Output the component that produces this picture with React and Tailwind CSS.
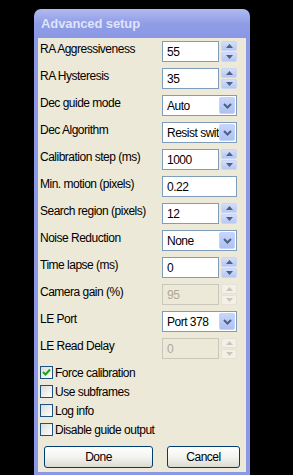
const rows = [
  { label: 'RA Aggressiveness', kind: 'spin', value: '55' },
  { label: 'RA Hysteresis', kind: 'spin', value: '35' },
  { label: 'Dec guide mode', kind: 'select', value: 'Auto' },
  { label: 'Dec Algorithm', kind: 'select', value: 'Resist swit' },
  { label: 'Calibration step (ms)', kind: 'spin', value: '1000' },
  { label: 'Min. motion (pixels)', kind: 'text', value: '0.22' },
  { label: 'Search region (pixels)', kind: 'spin', value: '12' },
  { label: 'Noise Reduction', kind: 'select', value: 'None' },
  { label: 'Time lapse (ms)', kind: 'spin', value: '0' },
  { label: 'Camera gain (%)', kind: 'spin', value: '95', disabled: true },
  { label: 'LE Port', kind: 'select', value: 'Port 378' },
  { label: 'LE Read Delay', kind: 'spin', value: '0', disabled: true },
]

const checks = [
  { label: 'Force calibration', checked: true },
  { label: 'Use subframes' },
  { label: 'Log info' },
  { label: 'Disable guide output' },
]

function Arrow({ up, disabled }) {
  return (
    <svg width="7" height="4" viewBox="0 0 7 4">
      <path
        d={up ? 'M0 4 L3.5 0 L7 4 Z' : 'M0 0 L3.5 4 L7 0 Z'}
        fill={disabled ? '#c9c7ba' : '#4d6185'}
      />
    </svg>
  )
}

function SpinButtons({ disabled }) {
  const cls = disabled
    ? 'bg-[#f3f1e7] border-[#e4e2d6]'
    : 'bg-gradient-to-b from-[#d4def9] to-[#b6c7f1] border-[#c9d6f8]'
  return (
    <div className="ml-[2px] flex w-[16px] flex-col gap-[1px]">
      <div className={`flex h-[10px] items-center justify-center rounded-[2px] border ${cls}`}>
        <Arrow up disabled={disabled} />
      </div>
      <div className={`flex h-[10px] items-center justify-center rounded-[2px] border ${cls}`}>
        <Arrow disabled={disabled} />
      </div>
    </div>
  )
}

function Control({ row }) {
  if (row.kind === 'select') {
    return (
      <div className="flex h-[21px] w-[75px] items-center border border-[#7f9db9] bg-white pl-[4px] pr-[1px]">
        <span className="flex-1 overflow-hidden whitespace-nowrap text-[12px] leading-none text-black">{row.value}</span>
        <div className="flex h-[17px] w-[16px] items-center justify-center rounded-[2px] border border-[#c3d3fd] bg-gradient-to-b from-[#c6d5fb] to-[#aec1f0]">
          <svg width="9" height="6" viewBox="0 0 9 6">
            <path d="M1 1 L4.5 4.5 L8 1" fill="none" stroke="#4d6185" strokeWidth="2" />
          </svg>
        </div>
      </div>
    )
  }
  if (row.kind === 'text') {
    return (
      <div className="flex h-[21px] w-[75px] items-center border border-[#7f9db9] bg-white px-[4px] text-[12px] leading-none text-black">
        {row.value}
      </div>
    )
  }
  return (
    <div className="flex h-[21px] w-[75px]">
      <div
        className={`flex h-[21px] w-[57px] items-center border px-[4px] text-[12px] leading-none ${
          row.disabled ? 'border-[#c9c7ba] bg-[#ece9d8] text-[#aca899]' : 'border-[#7f9db9] bg-white text-black'
        }`}
      >
        {row.value}
      </div>
      <SpinButtons disabled={row.disabled} />
    </div>
  )
}

function Checkbox({ checked }) {
  return (
    <div className="flex h-[13px] w-[13px] items-center justify-center border border-[#1c5180] bg-gradient-to-br from-[#dcdcd7] to-white">
      {checked && (
        <svg width="9" height="9" viewBox="0 0 9 9">
          <path d="M1 4 L3.5 6.5 L8 1.5" fill="none" stroke="#21a121" strokeWidth="2" />
        </svg>
      )}
    </div>
  )
}

function XpButton({ children, className }) {
  return (
    <div
      className={`flex h-[22px] items-center justify-center rounded-[3px] border border-[#003c74] bg-gradient-to-b from-white via-[#f3f3ef] to-[#dcdbd2] text-[12px] text-black ${className}`}
    >
      {children}
    </div>
  )
}

export default function App() {
  return (
    <div className="h-[475px] w-[293px] overflow-hidden bg-black pt-[9px] font-['Liberation_Sans',sans-serif] tracking-[-0.5px]">
      <div className="ml-[34px] flex h-[466px] w-[216px] flex-col">
        {/* Title bar */}
        <div className="flex h-[29px] items-center rounded-t-[7px] bg-gradient-to-b from-[#b0b9f2] via-[#909de6] to-[#8a97e4] pl-[7px]">
          <span className="text-[13px] font-bold tracking-[-0.1px] text-[#dfe4fa]">Advanced setup</span>
        </div>

        {/* Body */}
        <div className="flex flex-1 flex-col border-x-[4px] border-b-[3px] border-[#8b98e4] bg-[#ece9d8] pt-[3px] text-[12px] text-black">
          {rows.map((row) => (
            <div key={row.label} className="flex h-[27px] items-start pl-[2px] pr-[9px]">
              <div className="flex-1 whitespace-nowrap pt-[1px] leading-[15px]">{row.label}</div>
              <Control row={row} />
            </div>
          ))}

          <div className="flex flex-col gap-[6px] pl-[2px] pt-[1px]">
            {checks.map((c) => (
              <div key={c.label} className="flex h-[13px] items-center gap-[2px]">
                <Checkbox checked={c.checked} />
                <span className="leading-none">{c.label}</span>
              </div>
            ))}
          </div>

          <div className="mt-[10px] flex pl-[6px]">
            <XpButton className="w-[109px]">Done</XpButton>
            <XpButton className="ml-[14px] w-[73px]">Cancel</XpButton>
          </div>
        </div>
      </div>
    </div>
  )
}
